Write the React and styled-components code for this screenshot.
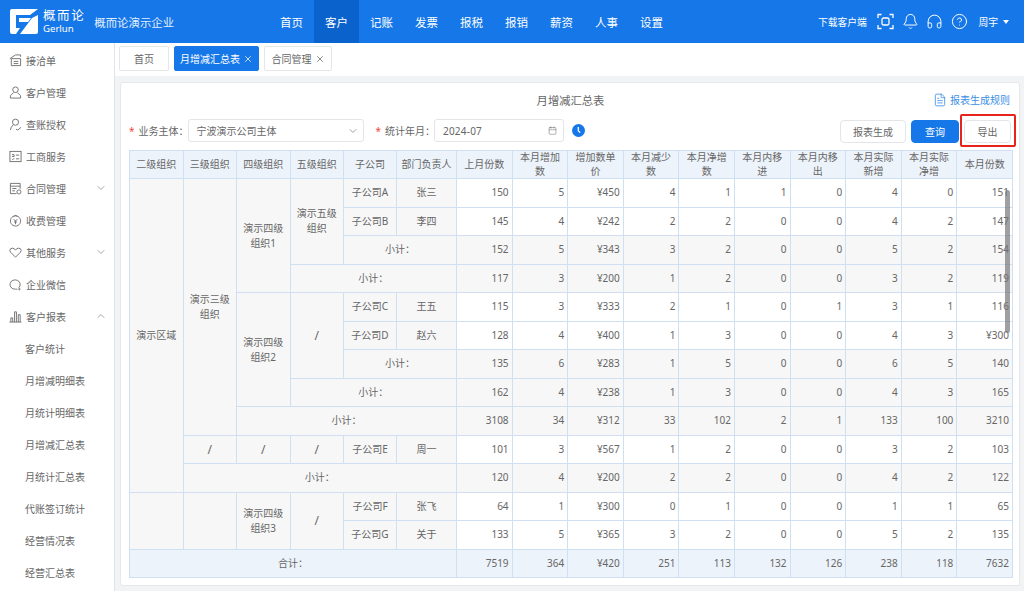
import React from 'react';
import styled, { createGlobalStyle } from 'styled-components';
import { Bell, Calendar, ChevronDown, ChevronUp, CircleHelp, FileText, Headphones, X } from 'lucide-react';

const navItems = ['首页', '客户', '记账', '发票', '报税', '报销', '薪资', '人事', '设置'];

const IntakeIcon = () => (
  <MenuIcon viewBox="0 0 14 14">
    <path d="M1 5 L7 1 H12.5 V3 M2.5 5 H12.5 V12.5 H2.5 Z M5 8 H10 M5 10.3 H10" />
  </MenuIcon>
);

const CustomerIcon = () => (
  <MenuIcon viewBox="0 0 14 14">
    <circle cx="7" cy="4" r="3" />
    <path d="M5 7 L1.5 10.5 V13 H12.5 V10.5 L9 7" />
  </MenuIcon>
);

const AuditIcon = () => (
  <MenuIcon viewBox="0 0 14 14">
    <circle cx="7" cy="4.5" r="3.3" />
    <path d="M4.5 7.5 Q2 9.5 1.5 13 M7.5 12 L9.5 13 L13 10" />
  </MenuIcon>
);

const BusinessIcon = () => (
  <MenuIcon viewBox="0 0 14 14">
    <rect x="1" y="1.5" width="12" height="11" />
    <path d="M3.3 5 H5.5 V7 H3.3 M3.3 9.5 L4.2 10.4 L5.6 8.8 M7.5 5.5 H11 M7.5 9.5 H11" />
  </MenuIcon>
);

const ContractIcon = () => (
  <MenuIcon viewBox="0 0 14 14">
    <path d="M8 12.5 H1.5 V1.5 H12 V7.5 M1.5 4.5 H12 M3.5 7 H8 M3.5 9.5 H6.5" />
    <circle cx="10.7" cy="10.7" r="2.2" />
  </MenuIcon>
);

const FeeIcon = () => (
  <MenuIcon viewBox="0 0 14 14">
    <path d="M5 2.5 Q7 0.5 9 2.5 M7 2 A5.5 5.5 0 1 0 7.01 2 M5.2 5.6 L7 7.6 L8.8 5.6 M7 7.6 V11 M5.4 8.6 H8.6" />
  </MenuIcon>
);

const ServiceIcon = () => (
  <MenuIcon viewBox="0 0 14 14">
    <path d="M7 12 L1.6 6.6 Q0.2 4.8 1.6 3 Q3.8 1 7 4 Q10.2 1 12.4 3 Q13.8 4.8 12.4 6.6 Z" />
  </MenuIcon>
);

const WechatIcon = () => (
  <MenuIcon viewBox="0 0 14 14">
    <path d="M10.5 10.5 A5.5 5 0 1 0 7 12 H9" />
    <circle cx="11.2" cy="12" r="0.8" />
  </MenuIcon>
);

const ReportIcon = () => (
  <MenuIcon viewBox="0 0 14 14">
    <path d="M0.5 13 H13.5 M2 13 V8.5 H4 V13 M6 13 V2 H8 V13 M10 13 V5 H12 V13" />
  </MenuIcon>
);

const menuItems = [
  { label: '接洽单', Icon: IntakeIcon },
  { label: '客户管理', Icon: CustomerIcon },
  { label: '查账授权', Icon: AuditIcon },
  { label: '工商服务', Icon: BusinessIcon },
  { label: '合同管理', Icon: ContractIcon, arrow: 'down' },
  { label: '收费管理', Icon: FeeIcon },
  { label: '其他服务', Icon: ServiceIcon, arrow: 'down' },
  { label: '企业微信', Icon: WechatIcon },
  { label: '客户报表', Icon: ReportIcon, arrow: 'up' },
];

const subMenuItems = ['客户统计', '月增减明细表', '月统计明细表', '月增减汇总表', '月统计汇总表', '代账签订统计', '经营情况表', '经营汇总表'];

const columns = ['二级组织', '三级组织', '四级组织', '五级组织', '子公司', '部门负责人', '上月份数', '本月增加数', '增加数单价', '本月减少数', '本月净增数', '本月内移进', '本月内移出', '本月实际新增', '本月实际净增', '本月份数'];

// lead: the merged organisation cells of a row, nums: the figures
const rows = [
  {
    lead: [
      { text: '演示区域', rowSpan: 11 },
      { text: '演示三级组织', rowSpan: 9 },
      { text: '演示四级组织1', rowSpan: 4 },
      { text: '演示五级组织', rowSpan: 3 },
      { text: '子公司A' },
      { text: '张三' },
    ],
    nums: [150, 5, '¥450', 4, 1, 1, 0, 4, 0, 151],
  },
  { lead: [{ text: '子公司B' }, { text: '李四' }], nums: [145, 4, '¥242', 2, 2, 0, 0, 4, 2, 147] },
  { lead: [{ text: '小计：', colSpan: 2 }], nums: [152, 5, '¥343', 3, 2, 0, 0, 5, 2, 154], subtotal: true },
  { lead: [{ text: '小计：', colSpan: 3 }], nums: [117, 3, '¥200', 1, 2, 0, 0, 3, 2, 119], subtotal: true },
  {
    lead: [
      { text: '演示四级组织2', rowSpan: 4 },
      { text: '/', rowSpan: 3, large: true },
      { text: '子公司C' },
      { text: '王五' },
    ],
    nums: [115, 3, '¥333', 2, 1, 0, 1, 3, 1, 116],
  },
  { lead: [{ text: '子公司D' }, { text: '赵六' }], nums: [128, 4, '¥400', 1, 3, 0, 0, 4, 3, '¥300'] },
  { lead: [{ text: '小计：', colSpan: 2 }], nums: [135, 6, '¥283', 1, 5, 0, 0, 6, 5, 140], subtotal: true },
  { lead: [{ text: '小计：', colSpan: 3 }], nums: [162, 4, '¥238', 1, 3, 0, 0, 4, 3, 165], subtotal: true },
  { lead: [{ text: '小计：', colSpan: 4 }], nums: [3108, 34, '¥312', 33, 102, 2, 1, 133, 100, 3210], subtotal: true },
  {
    lead: [{ text: '/', large: true }, { text: '/', large: true }, { text: '/', large: true }, { text: '子公司E' }, { text: '周一' }],
    nums: [101, 3, '¥567', 1, 2, 0, 0, 3, 2, 103],
  },
  { lead: [{ text: '小计：', colSpan: 5 }], nums: [120, 4, '¥200', 2, 2, 0, 0, 4, 2, 122], subtotal: true },
  {
    lead: [
      { text: '', rowSpan: 2 },
      { text: '', rowSpan: 2 },
      { text: '演示四级组织3', rowSpan: 2 },
      { text: '/', rowSpan: 2, large: true },
      { text: '子公司F' },
      { text: '张飞' },
    ],
    nums: [64, 1, '¥300', 0, 1, 0, 0, 1, 1, 65],
  },
  { lead: [{ text: '子公司G' }, { text: '关于' }], nums: [133, 5, '¥365', 3, 2, 0, 0, 5, 2, 135] },
];

const totals = [7519, 364, '¥420', 251, 113, 132, 126, 238, 118, 7632];

const columnWidths = [53.5, 53.5, 53.5, 53.5, 53, 60, 55.6, 55.6, 55.6, 55.6, 55.6, 55.6, 55.6, 55.6, 55.6, 55.6];

export default function App () {
  return (
    <Page>
      <GlobalStyle />
      <Header>
        <LogoBlock>
          <LogoMark viewBox="0 0 28 25">
            <path d="M2 0 H28 L20 6 H6 V19 H10 L6 25 H2 Q0 25 0 23 V2 Q0 0 2 0 Z" fill="#fff" />
            <path d="M9 9 H21 L18 13 H9 Z" fill="#fff" />
            <path d="M28 6 V23 Q28 25 26 25 H10 L22 9 Z" fill="#fff" />
          </LogoMark>
          <LogoText>
            <LogoName>概而论</LogoName>
            <LogoLatin>Gerlun</LogoLatin>
          </LogoText>
          <Company>概而论演示企业</Company>
        </LogoBlock>
        <Nav>
          {navItems.map((item) => (
            <NavItem key={item} $active={item === '客户'}>{item}</NavItem>
          ))}
        </Nav>
        <HeaderTools>
          <DownloadLink>下载客户端</DownloadLink>
          <ToolIcon viewBox="0 0 17 17">
            <path d="M1 5 V1.5 H4.5 M12.5 1.5 H16 V5 M16 12 V15.5 H12.5 M4.5 15.5 H1 V12" />
            <rect x="5" y="5" width="7" height="7" rx="1.5" />
          </ToolIcon>
          <Bell size={17} strokeWidth={1.4} />
          <Headphones size={17} strokeWidth={1.4} />
          <CircleHelp size={17} strokeWidth={1.4} />
          <UserName>周宇</UserName>
          <Caret />
        </HeaderTools>
      </Header>
      <Body>
        <Sidebar>
          {menuItems.map(({ label, Icon, arrow }) => (
            <MenuItem key={label}>
              <Icon />
              <MenuLabel>{label}</MenuLabel>
              {arrow === 'down' && <MenuArrow><ChevronDown size={12} strokeWidth={1.3} /></MenuArrow>}
              {arrow === 'up' && <MenuArrow><ChevronUp size={12} strokeWidth={1.3} /></MenuArrow>}
            </MenuItem>
          ))}
          {subMenuItems.map((label) => (
            <SubMenuItem key={label}>{label}</SubMenuItem>
          ))}
        </Sidebar>
        <Main>
          <TabBar>
            <Tab $width={50}>首页</Tab>
            <Tab $width={85} $active>
              月增减汇总表
              <X size={10} strokeWidth={1.8} />
            </Tab>
            <Tab $width={68}>
              合同管理
              <X size={10} strokeWidth={1.8} />
            </Tab>
          </TabBar>
          <Content>
            <Card>
              <TitleRow>
                <Title>月增减汇总表</Title>
                <RuleLink>
                  <FileText size={14} strokeWidth={1.4} />
                  报表生成规则
                </RuleLink>
              </TitleRow>
              <Toolbar>
                <FieldLabel>业务主体：</FieldLabel>
                <SelectBox>
                  宁波演示公司主体
                  <ChevronDown size={12} strokeWidth={1.2} />
                </SelectBox>
                <FieldLabel>统计年月：</FieldLabel>
                <DateBox>
                  2024-07
                  <Calendar size={9} strokeWidth={1.3} />
                </DateBox>
                <ClockDot viewBox="0 0 13 13">
                  <circle cx="6.5" cy="6.5" r="6.5" fill="#1677e8" />
                  <path d="M6.3 3 V6.8 L8.2 8.6" stroke="#fff" strokeWidth="1.3" fill="none" />
                </ClockDot>
                <Actions>
                  <ActionButton $width={66}>报表生成</ActionButton>
                  <ActionButton $width={48} $primary>查询</ActionButton>
                  <ExportFrame>
                    <ActionButton $width={47}>导出</ActionButton>
                  </ExportFrame>
                </Actions>
              </Toolbar>
              <TableWrap>
                <Table>
                  <colgroup>
                    {columnWidths.map((width, index) => <col key={index} style={{ width }} />)}
                  </colgroup>
                  <thead>
                    <tr>
                      {columns.map((name) => <HeadCell key={name}>{name}</HeadCell>)}
                    </tr>
                  </thead>
                  <tbody>
                    {rows.map((row, rowIndex) => (
                      <tr key={rowIndex}>
                        {row.lead.map((cell, cellIndex) => (
                          <LeadCell key={cellIndex} rowSpan={cell.rowSpan} colSpan={cell.colSpan} $large={cell.large}>
                            {cell.text}
                          </LeadCell>
                        ))}
                        {row.nums.map((num, numIndex) => (
                          <NumCell key={numIndex} $shaded={row.subtotal}>{num}</NumCell>
                        ))}
                      </tr>
                    ))}
                    <tr>
                      <TotalCell colSpan={6}>合计：</TotalCell>
                      {totals.map((num, index) => <TotalNum key={index}>{num}</TotalNum>)}
                    </tr>
                  </tbody>
                </Table>
                <ScrollThumb />
              </TableWrap>
            </Card>
          </Content>
        </Main>
      </Body>
    </Page>
  );
}

const GlobalStyle = createGlobalStyle`
  html, body {
    margin: 0;
    height: 100%;
    overflow: hidden;
    background: #fff;
  }
  body {
    font-family: "Noto Sans", "Noto Sans CJK SC", sans-serif;
    color: #666;
  }
`;

const Page = styled('div')`
  display: flex;
  flex-direction: column;
  width: 1024px;
  height: 591px;
  overflow: hidden;
`;

const Header = styled('header')`
  display: flex;
  flex: none;
  align-items: stretch;
  height: 43px;
  background: #1677e8;
  color: #fff;
`;

const LogoBlock = styled('div')`
  display: flex;
  align-items: center;
  width: 269px;
  padding-left: 10px;
  box-sizing: border-box;
`;

const LogoMark = styled('svg')`
  width: 28px;
  height: 25px;
  flex: none;
`;

const LogoText = styled('div')`
  display: flex;
  flex-direction: column;
  margin-left: 5px;
  line-height: 1;
`;

const LogoName = styled('span')`
  font-size: 12.5px;
  letter-spacing: 1.6px;
  line-height: 14px;
`;

const LogoLatin = styled('span')`
  font-size: 9.6px;
  line-height: 12px;
`;

const Company = styled('span')`
  margin-left: 9px;
  font-size: 11.4px;
  color: #e3efff;
`;

const Nav = styled('nav')`
  display: flex;
`;

const NavItem = styled('div')`
  display: flex;
  align-items: center;
  justify-content: center;
  width: 45px;
  font-size: 11.5px;
  background: ${(props) => (props.$active ? '#0a62cc' : 'transparent')};
`;

const HeaderTools = styled('div')`
  display: flex;
  flex: 1;
  align-items: center;
  justify-content: flex-end;
  gap: 7.5px;
  padding-right: 15px;
`;

const DownloadLink = styled('span')`
  margin-right: 3px;
  font-size: 9.8px;
`;

const ToolIcon = styled('svg')`
  width: 17px;
  height: 17px;
  fill: none;
  stroke: #fff;
  stroke-width: 1.3;
`;

const UserName = styled('span')`
  margin-left: 3px;
  margin-right: -2.5px;
  font-size: 9.8px;
`;

const Caret = styled('span')`
  width: 0;
  height: 0;
  border-left: 3px solid transparent;
  border-right: 3px solid transparent;
  border-top: 4px solid #fff;
`;

const Body = styled('div')`
  display: flex;
  flex: 1;
  min-height: 0;
`;

const Sidebar = styled('aside')`
  flex: none;
  width: 114px;
  padding-top: 1px;
  border-right: 1px solid #dfe4ea;
  overflow: hidden;
`;

const MenuItem = styled('div')`
  display: flex;
  align-items: center;
  height: 32px;
  padding: 0 7px 0 9px;
  color: #666;
  font-size: 10px;
`;

const MenuIcon = styled('svg')`
  flex: none;
  width: 13px;
  height: 13px;
  fill: none;
  stroke: #6f6f6f;
  stroke-width: 1;
`;

const MenuLabel = styled('span')`
  margin-left: 4px;
`;

const MenuArrow = styled('span')`
  display: flex;
  margin-left: auto;
  color: #777;
`;

const SubMenuItem = styled('div')`
  display: flex;
  align-items: center;
  height: 32px;
  padding-left: 25px;
  font-size: 10px;
`;

const Main = styled('main')`
  display: flex;
  flex: 1;
  flex-direction: column;
  min-width: 0;
`;

const TabBar = styled('div')`
  display: flex;
  flex: none;
  gap: 5px;
  height: 33px;
  padding: 3px 0 0 4px;
  box-sizing: border-box;
`;

const Tab = styled('div')`
  display: flex;
  align-items: center;
  justify-content: center;
  gap: 3px;
  width: ${(props) => props.$width}px;
  height: 25px;
  box-sizing: border-box;
  border: 1px solid ${(props) => (props.$active ? '#1677e8' : '#e4e7ea')};
  border-radius: 2px;
  font-size: 10px;
  color: ${(props) => (props.$active ? '#fff' : '#666')};
  background: ${(props) => (props.$active ? '#1677e8' : '#fff')};
`;

const Content = styled('div')`
  flex: 1;
  min-height: 0;
  padding: 6px 4px 5px 5px;
  background: #f2f3f5;
`;

const Card = styled('section')`
  height: 100%;
  box-sizing: border-box;
  padding: 0 7px 0 8px;
  border: 1px solid #e6e8eb;
  border-radius: 3px;
  background: #fff;
`;

const TitleRow = styled('div')`
  position: relative;
  display: flex;
  align-items: center;
  justify-content: center;
  height: 34px;
`;

const Title = styled('h1')`
  margin: 0;
  font-size: 11.3px;
  font-weight: 400;
  color: #666;
`;

const RuleLink = styled('a')`
  position: absolute;
  top: 9px;
  right: 2px;
  display: flex;
  align-items: center;
  gap: 3px;
  font-size: 10px;
  color: #3a8ee6;
`;

const Toolbar = styled('div')`
  display: flex;
  align-items: center;
  height: 33px;
  padding-bottom: 6px;
  box-sizing: border-box;
`;

const FieldLabel = styled('span')`
  margin-right: -1px;
  font-size: 10px;
  white-space: nowrap;

  &::before {
    content: '*';
    margin-right: 4px;
    color: #f5483b;
  }
`;

const SelectBox = styled('div')`
  display: flex;
  align-items: center;
  justify-content: space-between;
  width: 176px;
  height: 23px;
  margin-right: 12px;
  padding: 0 4px 0 8px;
  box-sizing: border-box;
  border: 1px solid #e3e5e8;
  border-radius: 3px;
  font-size: 10px;
`;

const DateBox = styled(SelectBox)`
  width: 130px;
  margin-right: 8px;
  padding: 0 6px 0 8px;
  letter-spacing: 0.2px;
`;

const ClockDot = styled('svg')`
  width: 13px;
  height: 13px;
  flex: none;
`;

const Actions = styled('div')`
  display: flex;
  align-items: center;
  gap: 5px;
  margin: 2px 1px 0 auto;
`;

const ActionButton = styled('button')`
  width: ${(props) => props.$width}px;
  height: 23px;
  padding: 0;
  border: 1px solid ${(props) => (props.$primary ? '#1677e8' : '#e3e5e8')};
  border-radius: 4px;
  font-family: inherit;
  font-size: 10px;
  color: ${(props) => (props.$primary ? '#fff' : '#666')};
  background: ${(props) => (props.$primary ? '#1677e8' : '#fff')};
`;

const ExportFrame = styled('div')`
  display: flex;
  margin: -6px -5px -4px -4px;
  padding: 4px 3px 2px 2px;
  border: 2px solid #e8231c;
  border-radius: 2px;
`;

const TableWrap = styled('div')`
  position: relative;
`;

const Table = styled('table')`
  width: 883px;
  table-layout: fixed;
  border-collapse: collapse;
  font-size: 10px;
  line-height: 15px;
  color: #666;
`;

const HeadCell = styled('th')`
  height: 28px;
  padding: 0 4px;
  box-sizing: border-box;
  border: 1px solid #cfe0f2;
  font-weight: 400;
  line-height: 13.5px;
  background: #edf3fa;
  text-align: center;
`;

const LeadCell = styled('td')`
  height: 28.5px;
  padding: 0 5px;
  box-sizing: border-box;
  border: 1px solid #cfe0f2;
  background: #f7f7f7;
  text-align: center;
  font-size: ${(props) => (props.$large ? '12px' : '10px')};
`;

const NumCell = styled('td')`
  height: 28.5px;
  padding: 0 3px;
  box-sizing: border-box;
  border: 1px solid #cfe0f2;
  background: ${(props) => (props.$shaded ? '#f7f7f7' : '#fff')};
  text-align: right;
`;

const TotalCell = styled('td')`
  height: 28.5px;
  box-sizing: border-box;
  border: 1px solid #cfe0f2;
  background: #edf3fa;
  text-align: center;
`;

const TotalNum = styled(TotalCell)`
  padding: 0 3px;
  text-align: right;
`;

const ScrollThumb = styled('div')`
  position: absolute;
  top: 40px;
  right: 2px;
  width: 5px;
  height: 143px;
  border-radius: 3px;
  background: rgba(120, 120, 120, 0.7);
`;
